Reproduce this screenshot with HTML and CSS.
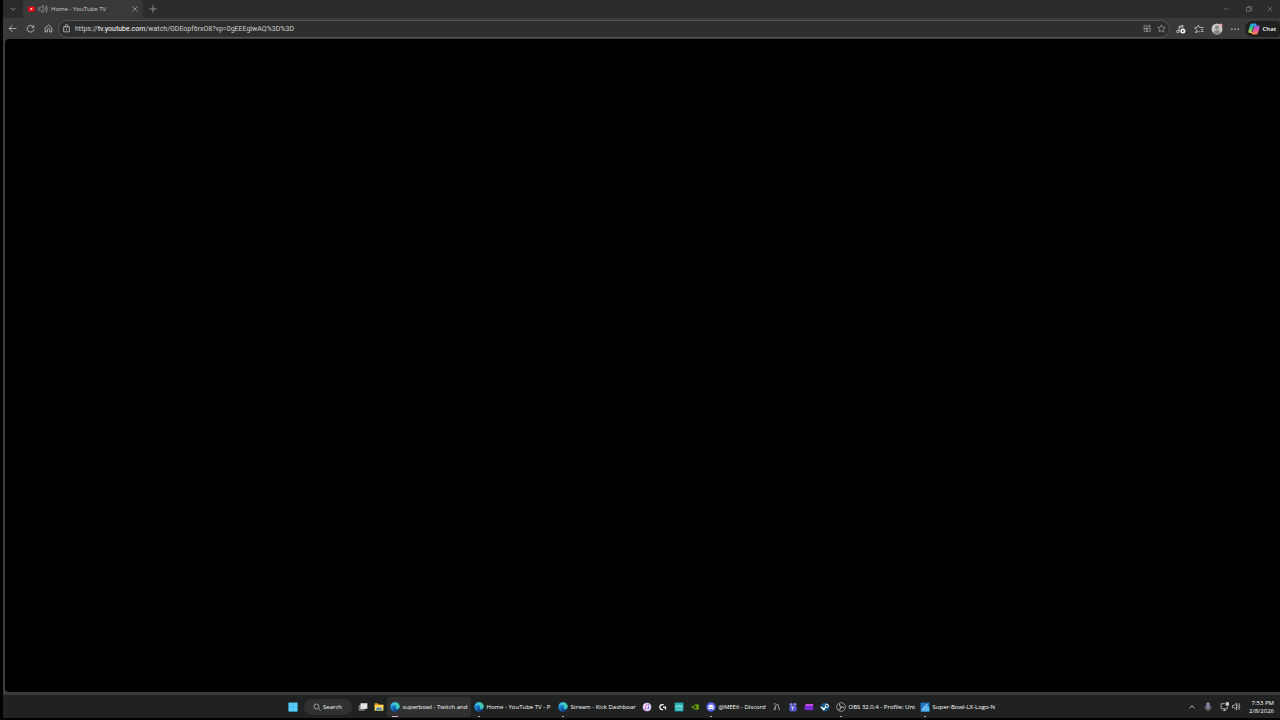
FILE: index.html
```html
<!DOCTYPE html>
<html lang="en">
<head>
<meta charset="utf-8">
<title>Home - YouTube TV</title>
<link rel="stylesheet" href="styles.css">
</head>
<body>
<svg class="defs" aria-hidden="true">
  <defs>
    <linearGradient id="edge-g" x1="0" y1="0" x2="1" y2="1"><stop offset="0" stop-color="#2fb4e8"/><stop offset=".5" stop-color="#1677cf"/><stop offset="1" stop-color="#0d4fa0"/></linearGradient>
    <linearGradient id="edge-t" x1="0" y1="0" x2="1" y2="0"><stop offset="0" stop-color="#35b9ef"/><stop offset="1" stop-color="#46cfa0"/></linearGradient>
    <linearGradient id="cop-a" x1="0" y1="0" x2="0" y2="1"><stop offset="0" stop-color="#1f9dff"/><stop offset=".5" stop-color="#35c98a"/><stop offset="1" stop-color="#f4c82f"/></linearGradient>
    <linearGradient id="cop-b" x1="0" y1="0" x2="0" y2="1"><stop offset="0" stop-color="#8d5cf5"/><stop offset=".5" stop-color="#ee4fa5"/><stop offset="1" stop-color="#ff8a48"/></linearGradient>
    <linearGradient id="note-g" x1="0" y1="0" x2="1" y2="1"><stop offset="0" stop-color="#f05ac0"/><stop offset="1" stop-color="#5d79f0"/></linearGradient>
    <symbol id="edge" viewBox="0 0 16 16">
      <circle cx="8" cy="8" r="7.500" fill="url(#edge-g)"/>
      <path d="M1 6C2 2 5 .5 8 .5c5 0 7.500 3.500 7.500 6.500 0 2.500-2 4-4.500 4-1.500 0-2-.8-1.300-1.700C10.500 7 9 4.800 6 4.800 3.500 4.800 1.700 5.600 1 6z" fill="url(#edge-t)"/>
      <path d="M7 7c-1.500 3 1.500 6 6.500 5.500-1 1.300-2.500 2.300-4.500 2.500C5 14.500 4 9 7 7z" fill="#123f78"/>
    </symbol>
  </defs>
</svg>
<div class="screen">
  <div class="browser">
    <header class="tabs">
      <button class="btn tab-menu" aria-label="Tab actions"><svg class="ico" viewBox="0 0 16 16"><path d="M4 6l4 4 4-4"/></svg></button>
      <div class="tab">
        <svg class="favicon" viewBox="0 0 16 16"><rect x="0" y="2" width="16" height="12" rx="3" fill="#e60914"/><path d="M6 5l5 3-5 3z" fill="#fff"/></svg>
        <button class="btn sound" aria-label="Mute tab"><svg class="ico" viewBox="0 0 16 16"><path d="M1 6v4h3l4 4V2L4 6zM11 5q2 3 0 6M13 2q4 6 0 12"/></svg></button>
        <span class="tab-title">Home - YouTube TV</span>
        <button class="btn close" aria-label="Close tab"><svg class="ico" viewBox="0 0 16 16"><path d="M4 4l8 8M12 4l-8 8"/></svg></button>
      </div>
      <button class="btn new-tab" aria-label="New tab"><svg class="ico" viewBox="0 0 16 16"><path d="M8 2v12M2 8h12"/></svg></button>
      <div class="win">
        <button class="btn" aria-label="Minimize"><svg class="ico" viewBox="0 0 16 16"><path d="M3 8h10"/></svg></button>
        <button class="btn" aria-label="Restore"><svg class="ico" viewBox="0 0 16 16"><path d="M3 5h7v8H3zM6 5V3h7v8h-3"/></svg></button>
        <button class="btn" aria-label="Close"><svg class="ico" viewBox="0 0 16 16"><path d="M3 3l10 10M13 3L3 13"/></svg></button>
      </div>
    </header>
    <nav class="toolbar">
      <button class="btn nav bright" aria-label="Back"><svg class="ico" viewBox="0 0 16 16"><path d="M15 8H2M8 2L2 8l6 6"/></svg></button>
      <button class="btn nav bright" aria-label="Reload"><svg class="ico" viewBox="0 0 16 16"><path d="M13 5a6 6 0 1 0 1 4M14 2v4h-4"/></svg></button>
      <button class="btn nav bright" aria-label="Home"><svg class="ico" viewBox="0 0 16 16"><path d="M2 7l6-5 6 5v7h-4v-4a2 2 0 0 0-4 0v4H2z"/></svg></button>
      <div class="address">
        <svg class="ico bright" viewBox="0 0 16 16"><path d="M3 5h10v9H3zM6 5V3a2 2 0 0 1 4 0v2M8 8v3"/></svg>
        <div class="url" role="textbox" contenteditable="true" spellcheck="false" aria-label="Address">https://<b>tv.youtube.com</b>/watch/GDEopf6rxO8?vp=0gEEEglwAQ%3D%3D</div>
        <button class="btn" aria-label="Apps"><svg class="ico" viewBox="0 0 16 16"><path d="M2 3h5v10H2zM2 8h11v5H7V8M11 1v5M9 4h5"/></svg></button>
        <button class="btn" aria-label="Add favorite"><svg class="ico" viewBox="0 0 16 16"><path d="M8 1.500l2 4.300 4.700.6-3.500 3.200.9 4.700L8 12l-4.100 2.300.9-4.700L1.300 6.400 6 5.800z"/></svg></button>
      </div>
      <div class="tools">
        <button class="btn bright" aria-label="Media"><svg class="ico" viewBox="0 0 16 16"><path d="M5 12V4l6-2v4M5 6l6-2"/><circle cx="3" cy="12" r="2"/><circle cx="11" cy="11" r="4" fill="#fff" stroke="none"/><path d="M10 9l3 2-3 2z" fill="#222" stroke="none"/></svg></button>
        <button class="btn bright" aria-label="Favorites"><svg class="ico" viewBox="0 0 16 16"><path d="M9 12.500l-2-1-4 2.500 1-5L1 6l4-.5L7 2l2 3.500h6M11 9h4M11 12h4"/></svg></button>
        <button class="btn" aria-label="Profile"><svg class="avatar" viewBox="0 0 24 24"><circle cx="12" cy="12" r="11" fill="#c9c7c5"/><circle cx="12" cy="9" r="4" fill="#8b8988"/><path d="M5 20c0-9 14-9 14 0-4 4-10 4-14 0z" fill="#8b8988"/><circle cx="20" cy="4" r="3" fill="#e8a0a8"/></svg></button>
        <button class="btn bright" aria-label="Settings and more"><svg class="ico" viewBox="0 0 16 16"><path d="M2 7h2v2H2zM7 7h2v2H7zM12 7h2v2h-2z" fill="#ddd" stroke="none"/></svg></button>
      </div>
      <button class="btn chat"><svg class="copilot" viewBox="0 0 24 24"><path d="M8 1h6c2 0 3 1 3 3l-4 13c-1 2-2 3-4 3H4c-3 0-4-2-3-5L4 5c1-3 2-4 4-4z" fill="url(#cop-a)"/><path d="M15 5h5c3 0 4 2 3 5l-3 9c-1 3-2 4-4 4h-6c-2 0-3-1-2-3l4-12c1-2 2-3 3-3z" fill="url(#cop-b)"/><path d="M12 6l-4 12" stroke="#222" stroke-width="1.500"/></svg>Chat</button>
    </nav>
    <main class="page"></main>
  </div>
  <footer class="taskbar">
    <div class="apps">
      <button class="app" aria-label="Start"><svg class="app-ico" viewBox="0 0 16 16"><path d="M1 1h14v14H1z" fill="#37b4ea"/><path d="M1 1h6.500v6.500H1zM8.500 1H15v6.500H8.500zM1 8.500h6.500V15H1zM8.500 8.500H15V15H8.500z" fill="#58cdf7"/></svg></button>
      <button class="search"><svg class="ico bright" viewBox="0 0 16 16"><circle cx="7" cy="7" r="5"/><path d="M11 11l4 4"/></svg>Search</button>
      <button class="app" aria-label="Task view"><svg class="app-ico" viewBox="0 0 16 16"><rect x="1" y="5" width="10" height="9" fill="#777"/><rect x="4" y="2" width="11" height="9" fill="#e4e4e4"/></svg></button>
      <button class="app" aria-label="File Explorer"><svg class="app-ico" viewBox="0 0 16 16"><path d="M1 2h5l2 2h7v4H1z" fill="#e5a21c"/><path d="M1 5h14v9H1z" fill="#fcd462"/><path d="M4 9h8v5h-2v-2H6v2H4z" fill="#2d7cc4"/></svg></button>
      <button class="app wide active"><svg class="app-ico" viewBox="0 0 16 16"><use href="#edge"/></svg><span class="label">superbowl - Twitch and</span></button>
      <button class="app wide run"><svg class="app-ico" viewBox="0 0 16 16"><use href="#edge"/></svg><span class="label">Home - YouTube TV - P</span></button>
      <button class="app wide run"><svg class="app-ico" viewBox="0 0 16 16"><use href="#edge"/></svg><span class="label">Stream - Kick Dashboar</span></button>
      <button class="app" aria-label="iTunes"><svg class="app-ico" viewBox="0 0 16 16"><circle cx="8" cy="8" r="6.500" fill="#f7f0fa" stroke="#c18bea"/><path d="M6 11V5l5-1v6" fill="none" stroke="url(#note-g)" stroke-width="1.500"/><circle cx="5.500" cy="11" r="1.500" fill="#c45ae0"/><circle cx="10" cy="10" r="1.500" fill="#5d79f0"/></svg></button>
      <button class="app" aria-label="Logitech G HUB"><svg class="app-ico" viewBox="0 0 16 16"><path d="M9 4H7a4 4 0 0 0 0 8h1M8 8h4v4" fill="none" stroke="#fff" stroke-width="2"/></svg></button>
      <button class="app" aria-label="Audio tool"><svg class="app-ico" viewBox="0 0 16 16"><rect x="1" y="1" width="14" height="14" fill="#27aeb4"/><path d="M3 5v4h2V5M7 9V5h2v4M11 5v4h2V5M3 12h10" fill="none" stroke="#a5f0ec"/></svg></button>
      <button class="app" aria-label="NVIDIA"><svg class="app-ico" viewBox="0 0 16 16"><path d="M7 4h7v8H7z" fill="#76b900"/><path d="M2 8q5-6 10 0-5 6-10 0z" fill="#76b900" stroke="#23330c"/><circle cx="7.500" cy="8" r="2" fill="#23330c"/></svg></button>
      <button class="app discord run"><svg class="app-ico" viewBox="0 0 16 16"><circle cx="8" cy="8" r="7.500" fill="#5865f2"/><path d="M3.500 11q0-5 2-6.500h5q2 1.500 2 6.500l-2 1-1-1h-3l-1 1z" fill="#fff"/><circle cx="6.300" cy="8.500" r="1" fill="#5865f2"/><circle cx="9.700" cy="8.500" r="1" fill="#5865f2"/></svg><span class="label">@MEE6 - Discord</span></button>
      <button class="app" aria-label="Launcher"><svg class="app-ico" viewBox="0 0 16 16"><path d="M3 3h3M5 13V7l4-4 3 10M3 13l3-6" fill="none" stroke="#aaa" stroke-width="1.500"/></svg></button>
      <button class="app" aria-label="Teams"><svg class="app-ico" viewBox="0 0 16 16"><circle cx="5" cy="4" r="2.500" fill="#7b83eb"/><circle cx="11" cy="3.500" r="2.500" fill="#7b83eb"/><rect x="2" y="6" width="12" height="9" rx="3" fill="#5b56d8"/><path d="M5 8h5M7.500 8v5" stroke="#ddd" stroke-width="1.500"/></svg></button>
      <button class="app" aria-label="Video editor"><svg class="app-ico" viewBox="0 0 16 16"><path d="M3 3h12l-1 4H1z" fill="#c24bea"/><path d="M1 7h14v6H1z" fill="#7c2bdc"/></svg></button>
      <button class="app" aria-label="Steam"><svg class="app-ico" viewBox="0 0 16 16"><circle cx="8" cy="8" r="7" fill="#155a83"/><path d="M1 8l5 3 4-4" fill="none" stroke="#fff" stroke-width="2"/><circle cx="11" cy="6" r="2.500" fill="#155a83" stroke="#fff" stroke-width="1.500"/><circle cx="6" cy="11" r="2" fill="#fff"/></svg></button>
      <button class="app wide run"><svg class="app-ico" viewBox="0 0 16 16"><circle cx="8" cy="8" r="7" fill="#222" stroke="#c8c8c8"/><path d="M8 8q-4-2-2-5M8 8q4-1 5 2M8 8q0 4-4 4" fill="none" stroke="#c8c8c8" stroke-width="1.500"/></svg><span class="label">OBS 32.0.4 - Profile: Unt</span></button>
      <button class="app wide run"><svg class="app-ico" viewBox="0 0 16 16"><rect x="1" y="1" width="14" height="14" fill="#1f78cf"/><path d="M1 15L11 5l4 4v6z" fill="#55b8f2"/><path d="M3 12L12 3" stroke="#e4f4ff" stroke-width="1.500"/></svg><span class="label">Super-Bowl-LX-Logo-N</span></button>
    </div>
    <div class="tray">
      <button class="btn bright" aria-label="Hidden icons"><svg class="ico" viewBox="0 0 16 16"><path d="M4 10l4-4 4 4"/></svg></button>
      <button class="btn" aria-label="Microphone"><svg class="ico" viewBox="0 0 16 16"><rect x="6" y="1" width="4" height="9" rx="2" fill="#8a78b8"/><path d="M3 7q0 5 5 5t5-5M8 12v3"/></svg></button>
      <button class="btn bright status" aria-label="Network and volume"><svg class="ico" viewBox="0 0 16 16"><path d="M9 3H2v9h11V8M5 15h6M8 12v3"/><path d="M11 1h4v5h-4z" fill="#ddd"/></svg><svg class="ico" viewBox="0 0 16 16"><path d="M1 6v4h3l4 4V2L4 6zM10 5q2 3 0 6M12 2q4 6 0 12"/></svg></button>
      <button class="btn clock"><span>7:53 PM</span><span>2/8/2026</span></button>
    </div>
  </footer>
</div>
</body>
</html>
```
FILE: styles.css
```css
* { box-sizing: border-box; }
body {
  margin: 0;
  background: #000;
  color: #e2e2e2;
  font: 6px/10px "Open Sans", "Noto Sans", sans-serif;
}
button {
  margin: 0;
  padding: 0;
  border: 0;
  background: none;
  color: inherit;
  font: inherit;
}
.defs { position: absolute; width: 0; height: 0; }
.screen {
  display: flex;
  flex-direction: column;
  height: 100vh;
  padding: 0 0 2px 3px;
}
.browser {
  flex: 1;
  display: flex;
  flex-direction: column;
  background: #3b3b3b;
}
.ico {
  display: block;
  flex: none;
  width: 10px;
  height: 10px;
  fill: none;
  stroke: #9c9c9c;
  stroke-width: 1.3;
}
.bright .ico, .ico.bright { stroke: #d4d4d4; }
.btn {
  display: flex;
  align-items: center;
  justify-content: center;
  flex: none;
}
.tabs {
  display: flex;
  align-items: center;
  height: 18px;
  background: #2b2b2b;
}
.tab-menu { width: 20px; }
.tab {
  display: flex;
  align-items: center;
  gap: 3px;
  width: 120px;
  height: 18px;
  padding: 0 3px 0 5px;
  border-radius: 4px 4px 0 0;
  background: #393939;
}
.favicon { width: 7px; height: 8px; }
.tab-title { flex: 1; color: #d0d0d0; white-space: nowrap; }
.new-tab { width: 20px; }
.win {
  display: flex;
  margin-left: auto;
}
.win .btn { width: 23px; }
.win .btn:last-child { width: 20px; }
.win .ico { width: 8px; height: 8px; stroke: #808080; }
.toolbar {
  display: flex;
  align-items: center;
  height: 21px;
  background: #393939;
}
.nav { width: 18px; }
.nav .ico { width: 9px; height: 9px; }
.address {
  flex: 1;
  display: flex;
  align-items: center;
  gap: 4px;
  height: 18px;
  margin-left: 1px;
  padding: 0 2px 0 3px;
  border: 1px solid #555;
  border-radius: 9px;
  background: #2e2e2e;
}
.address .ico { width: 9px; height: 9px; }
.address .btn { width: 10px; }
.url {
  flex: 1;
  color: #d0d0d0;
  font-family: Roboto, "Open Sans", sans-serif;
  font-size: 7px;
  white-space: nowrap;
  outline: 0;
}
.url b { font-weight: 400; color: #fff; }
.tools { display: flex; margin: 0 1px 0 2px; }
.tools .btn { width: 18px; }
.avatar { width: 12px; height: 12px; }
.chat {
  gap: 3px;
  height: 16px;
  padding: 0 4px 0 3px;
  border-radius: 8px 4px 4px 8px;
  background: #202020;
  color: #fff;
  font-weight: 600;
}
.copilot { width: 12px; height: 12px; }
.page {
  flex: 1;
  margin: 0 0 3px 2px;
  border-radius: 4px 0 0 4px;
  background: #000;
}
.taskbar {
  display: grid;
  grid-template-columns: 1fr auto 1fr;
  height: 23px;
  padding-left: 2px;
  background: #202121;
  color: #fff;
}
.apps { grid-column: 2; display: flex; align-items: center; }
.app {
  position: relative;
  display: flex;
  align-items: center;
  gap: 3px;
  width: 16px;
  height: 20px;
  padding: 0 3px;
}
.app-ico { flex: none; width: 10px; height: 10px; }
.search {
  display: flex;
  align-items: center;
  justify-content: center;
  gap: 2px;
  width: 48px;
  height: 16px;
  margin: 0 3px;
  border-radius: 8px;
  background: #303131;
}
.search .ico { width: 8px; height: 8px; }
.wide { width: 84px; padding-right: 0; }
.discord { width: 66px; padding-right: 0; }
.label { flex: 1; text-align: left; white-space: nowrap; }
.active { border-radius: 3px; background: #303131; }
.active::after, .run::after {
  content: "";
  position: absolute;
  bottom: 0;
  left: 7px;
  width: 2px;
  height: 1px;
  background: #a8a8a8;
}
.active::after { left: 5px; width: 6px; background: #d9a8d5; }
.tray {
  display: flex;
  align-items: center;
  justify-content: flex-end;
  padding-right: 6px;
}
.tray .btn { width: 16px; }
.tray .status { gap: 3px; width: 28px; }
.tray .status .ico { width: 9px; height: 9px; }
.tray .clock {
  flex-direction: column;
  align-items: flex-end;
  width: 30px;
  line-height: 8px;
}
```
